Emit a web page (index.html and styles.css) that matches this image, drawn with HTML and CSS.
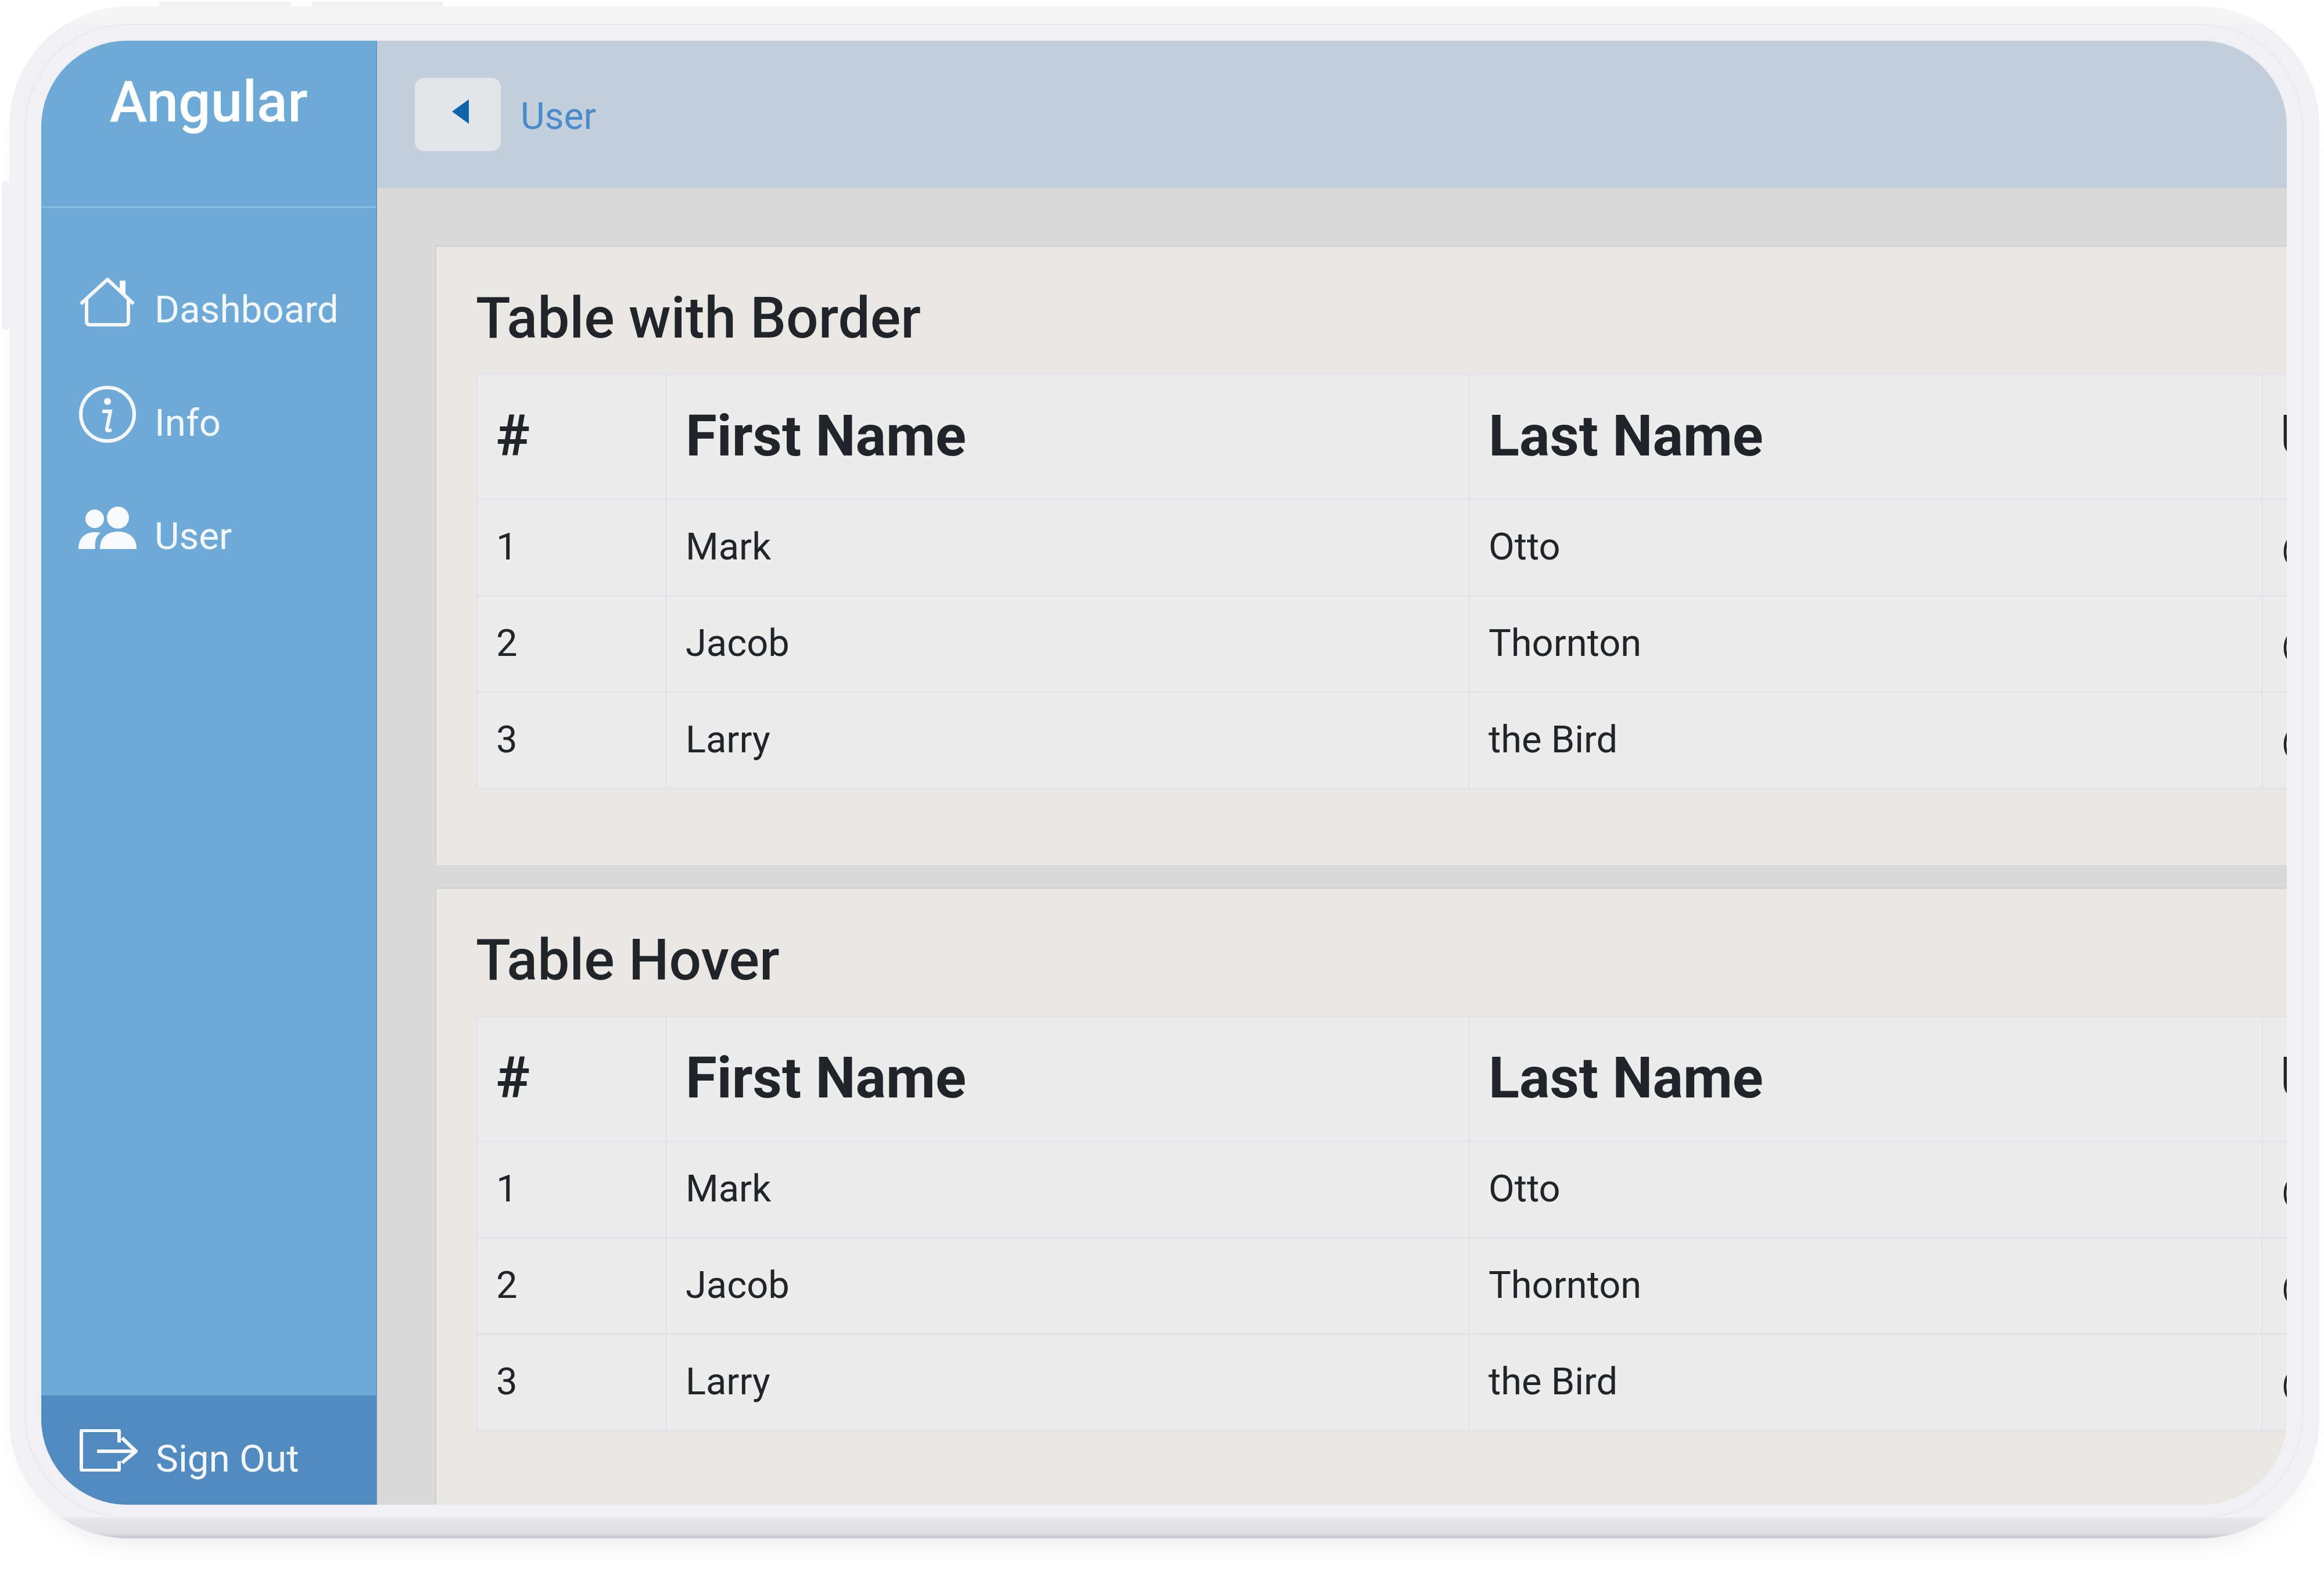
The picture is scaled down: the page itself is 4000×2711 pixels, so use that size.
FILE: index.html
```html
<!DOCTYPE html>
<html lang="en">
<head>
    <meta charset="UTF-8">
    <title>Angular</title>
    <link rel="stylesheet" href="styles.css">
</head>
<body>
    <div class="tablet">
        <span class="hw-btn hw-top-a"></span>
        <span class="hw-btn hw-top-b"></span>
        <span class="hw-btn hw-side"></span>

        <div class="screen">
            <aside class="sidebar">
                <div class="brand">Angular</div>

                <nav class="nav">
                    <a class="nav-item">
                        <svg class="nav-icon icon-home" viewBox="0 0 100 84">
                            <path class="line" d="M4 45 50 3l45 42M14 37v38q0 6 6 6h60q6 0 6-6V37"/>
                            <path class="solid" d="M71 5h10v24l-10-9z"/>
                        </svg>
                        Dashboard
                    </a>
                    <a class="nav-item">
                        <svg class="nav-icon icon-info" viewBox="0 0 100 100">
                            <circle class="line" cx="50" cy="50" r="46"/>
                            <circle class="solid" cx="50" cy="28" r="6"/>
                            <path class="line" d="M41 45h14l-6 30q-1 5 8 2"/>
                        </svg>
                        Info
                    </a>
                    <a class="nav-item">
                        <svg class="nav-icon" viewBox="0 0 100 73">
                            <circle class="solid" cx="68" cy="19" r="19"/>
                            <circle class="solid" cx="28" cy="21" r="16"/>
                            <path class="solid" d="M37 73C37 52 50 43 68 43s32 9 32 30z"/>
                            <path class="solid" d="M0 73C0 54 12 44 28 44c4 0 7 .5 10 1.5C29 52 28 62 29 73z"/>
                        </svg>
                        User
                    </a>
                </nav>

                <a class="signout">
                    <svg class="nav-icon" viewBox="0 0 100 73">
                        <path class="line" d="M68 23V4q0-2-2-2H5Q3 2 3 4v65q0 2 2 2h61q2 0 2-2V55M30 38h65M73 15l24 23-24 20"/>
                    </svg>
                    Sign Out
                </a>
            </aside>

            <div class="main">
                <header class="topbar">
                    <button class="back" type="button">
                        <svg class="back-icon" viewBox="0 0 30 42"><path d="M30 0v42L1 21z"/></svg>
                    </button>
                    <span class="crumb">User</span>
                </header>

                <div class="content">
                    <section class="card">
                        <h4 class="card-title">Table with Border</h4>
                        <table class="grid">
                            <colgroup><col class="c1"><col class="c2"><col class="c3"><col class="c4"></colgroup>
                            <thead>
                                <tr><th>#</th><th>First Name</th><th>Last Name</th><th>Username</th></tr>
                            </thead>
                            <tbody>
                                <tr><td>1</td><td>Mark</td><td>Otto</td><td>@mdo</td></tr>
                                <tr><td>2</td><td>Jacob</td><td>Thornton</td><td>@fat</td></tr>
                                <tr><td>3</td><td>Larry</td><td>the Bird</td><td>@twitter</td></tr>
                            </tbody>
                        </table>
                    </section>

                    <section class="card">
                        <h4 class="card-title">Table Hover</h4>
                        <table class="grid">
                            <colgroup><col class="c1"><col class="c2"><col class="c3"><col class="c4"></colgroup>
                            <thead>
                                <tr><th>#</th><th>First Name</th><th>Last Name</th><th>Username</th></tr>
                            </thead>
                            <tbody>
                                <tr><td>1</td><td>Mark</td><td>Otto</td><td>@mdo</td></tr>
                                <tr><td>2</td><td>Jacob</td><td>Thornton</td><td>@fat</td></tr>
                                <tr><td>3</td><td>Larry</td><td>the Bird</td><td>@twitter</td></tr>
                            </tbody>
                        </table>
                    </section>
                </div>
            </div>
        </div>
    </div>
</body>
</html>
```

FILE: styles.css
```css
html, body {
    margin: 0;
    background: #fff;
}

body {
    width: 4000px;
    height: 2711px;
    padding: 11px 0 0 16px;
    box-sizing: border-box;
    overflow: hidden;
    font-family: Roboto, "Liberation Sans", sans-serif;
    color: #212529;
}

/* device frame */
.tablet {
    position: relative;
    box-sizing: border-box;
    width: 3976px;
    height: 2637px;
    padding: 59px 56px 58px 55px;
    border-radius: 205px;
    background: linear-gradient(#f5f5f6 0, #f5f5f6 1.1%, #f1f1f4 1.2%, #f1f1f4 98.6%, #e7e7eb 98.7%, #e0e0e5 99.6%, #c6c6d0 100%);
    box-shadow: 0 34px 44px -30px rgba(120, 120, 135, .16);
}

.tablet::before {
    content: "";
    position: absolute;
    inset: 30px 28px 35px 26px;
    border: 2px solid #e9e9ed;
    border-radius: 178px;
}

.hw-btn {
    position: absolute;
    background: #f1f1f3;
    border-radius: 4px;
}

.hw-top-a { left: 258px; top: -8px; width: 227px; height: 8px; }
.hw-top-b { left: 520px; top: -8px; width: 227px; height: 8px; }
.hw-side { left: -13px; top: 301px; width: 13px; height: 255px; }

.screen {
    position: relative;
    display: flex;
    height: 100%;
    overflow: hidden;
    border-radius: 148px;
}

/* sidebar */
.sidebar {
    display: flex;
    flex-direction: column;
    flex: 0 0 578px;
    background: #6eaad7;
    border-right: 2px solid #5f9ac6;
    box-sizing: border-box;
    color: #f4f7fa;
}

.brand {
    height: 288px;
    box-sizing: border-box;
    padding-top: 50px;
    text-align: center;
    font-size: 98px;
    line-height: 112px;
    font-weight: 500;
    color: #fff;
    border-bottom: 3px solid #8dbbdf;
}

.nav {
    flex: 1;
    padding-top: 24px;
}

.nav-item {
    display: flex;
    align-items: flex-end;
    height: 195px;
    padding-left: 64px;
    font-size: 65.5px;
    line-height: 88px;
}

.nav-icon {
    width: 100px;
    margin-right: 31px;
    margin-bottom: 22px;
    flex: none;
}

.icon-home {
    margin-bottom: 15px;
}

.icon-info {
    margin-bottom: 9px;
}

.line {
    fill: none;
    stroke: #f6f8fb;
    stroke-width: 6;
}

.solid {
    fill: #f9fafc;
}

.signout {
    display: flex;
    align-items: flex-end;
    height: 188px;
    box-sizing: border-box;
    padding: 0 0 35px 66px;
    background: #528bbf;
    font-size: 65.5px;
    line-height: 88px;
}

/* main part */
.main {
    flex: 1;
    min-width: 0;
    display: flex;
    flex-direction: column;
    background: #dadada;
}

.topbar {
    display: flex;
    align-items: center;
    flex: 0 0 254px;
    padding-left: 65px;
    box-sizing: border-box;
    background: #c3d0dc;
}

.back {
    display: flex;
    align-items: center;
    justify-content: center;
    width: 148px;
    height: 126px;
    padding: 0 0 11px 8px;
    border: 0;
    border-radius: 16px;
    background: #e3e5e8;
}

.back-icon {
    width: 30px;
    fill: #0f63ab;
}

.crumb {
    margin: 6px 0 0 34px;
    font-size: 64px;
    color: #4a8bcb;
}

.content {
    display: flex;
    flex-direction: column;
    gap: 41px;
    padding: 101px 0 0 102px;
}

.card {
    flex: none;
    height: 1064px;
    box-sizing: border-box;
    padding-left: 68px;
    background: #e9e8e4;
    box-shadow: -2px -2px 3px rgba(0, 0, 0, .05);
}

.card-title {
    height: 218px;
    margin: 0;
    box-sizing: border-box;
    padding-top: 67px;
    font-size: 98px;
    line-height: 112px;
    font-weight: 500;
}

.grid {
    table-layout: fixed;
    width: 4073px;
    border-collapse: collapse;
    background: #ececec;
}

.c1 { width: 326px; }
.c2 { width: 1382px; }
.c3 { width: 1365px; }
.c4 { width: 1000px; }

.grid th, .grid td {
    padding: 0 0 0 32px;
    border: 3px solid #e1e5ea;
    text-align: left;
    white-space: nowrap;
}

.grid th {
    height: 209px;
    padding-bottom: 3px;
    font-size: 98px;
    font-weight: 700;
}

.grid th:last-child {
    padding-left: 30px;
}

.grid td {
    height: 159px;
    padding-bottom: 4px;
    font-size: 65px;
}
```
